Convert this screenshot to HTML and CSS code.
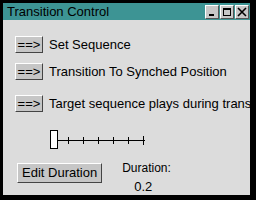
FILE: index.html
```html
<!DOCTYPE html>
<html lang="en">
<head>
  <meta charset="UTF-8" />
  <title>Transition Control</title>
  <link rel="stylesheet" href="styles.css">
</head>
<body>

  <div class="window">
    <!-- Title bar -->
    <div class="titlebar">
      <span class="title">Transition Control</span>
      <div class="controls">
        <span class="ctl"><svg width="10" height="10" viewBox="0 0 10 10"><rect x="2" y="7" width="5" height="2" fill="#000"/></svg></span>
        <span class="ctl"><svg width="10" height="10" viewBox="0 0 10 10"><rect x="1.5" y="1.5" width="7" height="7" fill="none" stroke="#000" stroke-width="1"/><rect x="1" y="1" width="8" height="2" fill="#000"/></svg></span>
        <span class="ctl"><svg width="10" height="10" viewBox="0 0 10 10"><path d="M1 1 L9 9 M9 1 L1 9" stroke="#000" stroke-width="1.6"/></svg></span>
      </div>
    </div>

    <div class="content">
      <div class="row first">
        <button class="btn arrow">==&gt;</button>
        <span class="label">Set Sequence</span>
      </div>
      <div class="row second">
        <button class="btn arrow">==&gt;</button>
        <span class="label">Transition To Synched Position</span>
      </div>
      <div class="row third">
        <button class="btn arrow">==&gt;</button>
        <span class="label">Target sequence plays during transition</span>
      </div>

      <!-- Duration slider -->
      <div class="slider">
        <div class="thumb"></div>
        <svg class="track" width="88" height="12" viewBox="0 0 88 12">
          <line x1="0" y1="6.5" x2="87" y2="6.5" stroke="#000"/>
          <line x1="10.5" y1="3" x2="10.5" y2="10" stroke="#000"/>
          <line x1="25.5" y1="3" x2="25.5" y2="10" stroke="#000"/>
          <line x1="40.5" y1="3" x2="40.5" y2="10" stroke="#000"/>
          <line x1="55.5" y1="3" x2="55.5" y2="10" stroke="#000"/>
          <line x1="70.5" y1="3" x2="70.5" y2="10" stroke="#000"/>
          <line x1="85.5" y1="2" x2="85.5" y2="11" stroke="#000"/>
        </svg>
      </div>

      <div class="bottom">
        <button class="btn edit">Edit Duration</button>
        <div class="duration">
          <div>Duration:</div>
          <div class="value">0.2</div>
        </div>
      </div>
    </div>
  </div>

</body>
</html>
```

FILE: styles.css
```css
body {
  margin: 0;
  background-color: #000;
  font-family: 'Liberation Sans', Arial, sans-serif;
  font-size: 13px;
  color: #000;
}
.window {
  margin: 3px 6px 0 3px;
  height: 192px;
  display: flex;
  flex-direction: column;
}
.titlebar {
  height: 17px;
  background-color: #3d9494;
  display: flex;
  align-items: center;
  justify-content: space-between;
}
.title {
  padding-left: 4px;
  font-size: 13px;
}
.controls {
  display: flex;
  gap: 1px;
  padding-right: 1px;
}
.ctl {
  width: 14px;
  height: 14px;
  background-color: #c8c8c8;
  border-top: 1px solid #fff;
  border-left: 1px solid #fff;
  border-right: 1px solid #555;
  border-bottom: 1px solid #555;
  box-sizing: border-box;
  display: flex;
  align-items: center;
  justify-content: center;
}
.content {
  flex: 1;
  background-color: #dcdcdc;
  overflow: hidden;
  white-space: nowrap;
}
.row {
  display: flex;
  align-items: center;
  gap: 6px;
  padding-left: 12px;
}
.row.first {
  margin-top: 16px;
}
.row.second {
  margin-top: 10px;
}
.row.third {
  margin-top: 15px;
}
.btn {
  flex-shrink: 0;
  font-family: 'Liberation Sans', Arial, sans-serif;
  font-size: 13px;
  color: #000;
  background-color: #c6c6c6;
  border-top: 1px solid #fff;
  border-left: 1px solid #fff;
  border-right: 1px solid #444;
  border-bottom: 1px solid #444;
  border-radius: 0;
  margin: 0;
  line-height: 14px;
}
.arrow {
  width: 28px;
  height: 17px;
  padding: 0;
}
.slider {
  display: flex;
  align-items: center;
  margin-top: 18px;
  padding-left: 47px;
}
.thumb {
  width: 6px;
  height: 17px;
  background-color: #fff;
  border: 1px solid #000;
}
.track {
  display: block;
}
.bottom {
  display: flex;
  align-items: flex-start;
  margin-top: 14px;
  padding-left: 14px;
}
.edit {
  height: 20px;
  padding: 0 4px;
}
.duration {
  margin-left: 20px;
  font-size: 12px;
  margin-top: -2px;
}
.duration .value {
  padding-left: 12px;
  margin-top: 4px;
  font-size: 13px;
}
```
